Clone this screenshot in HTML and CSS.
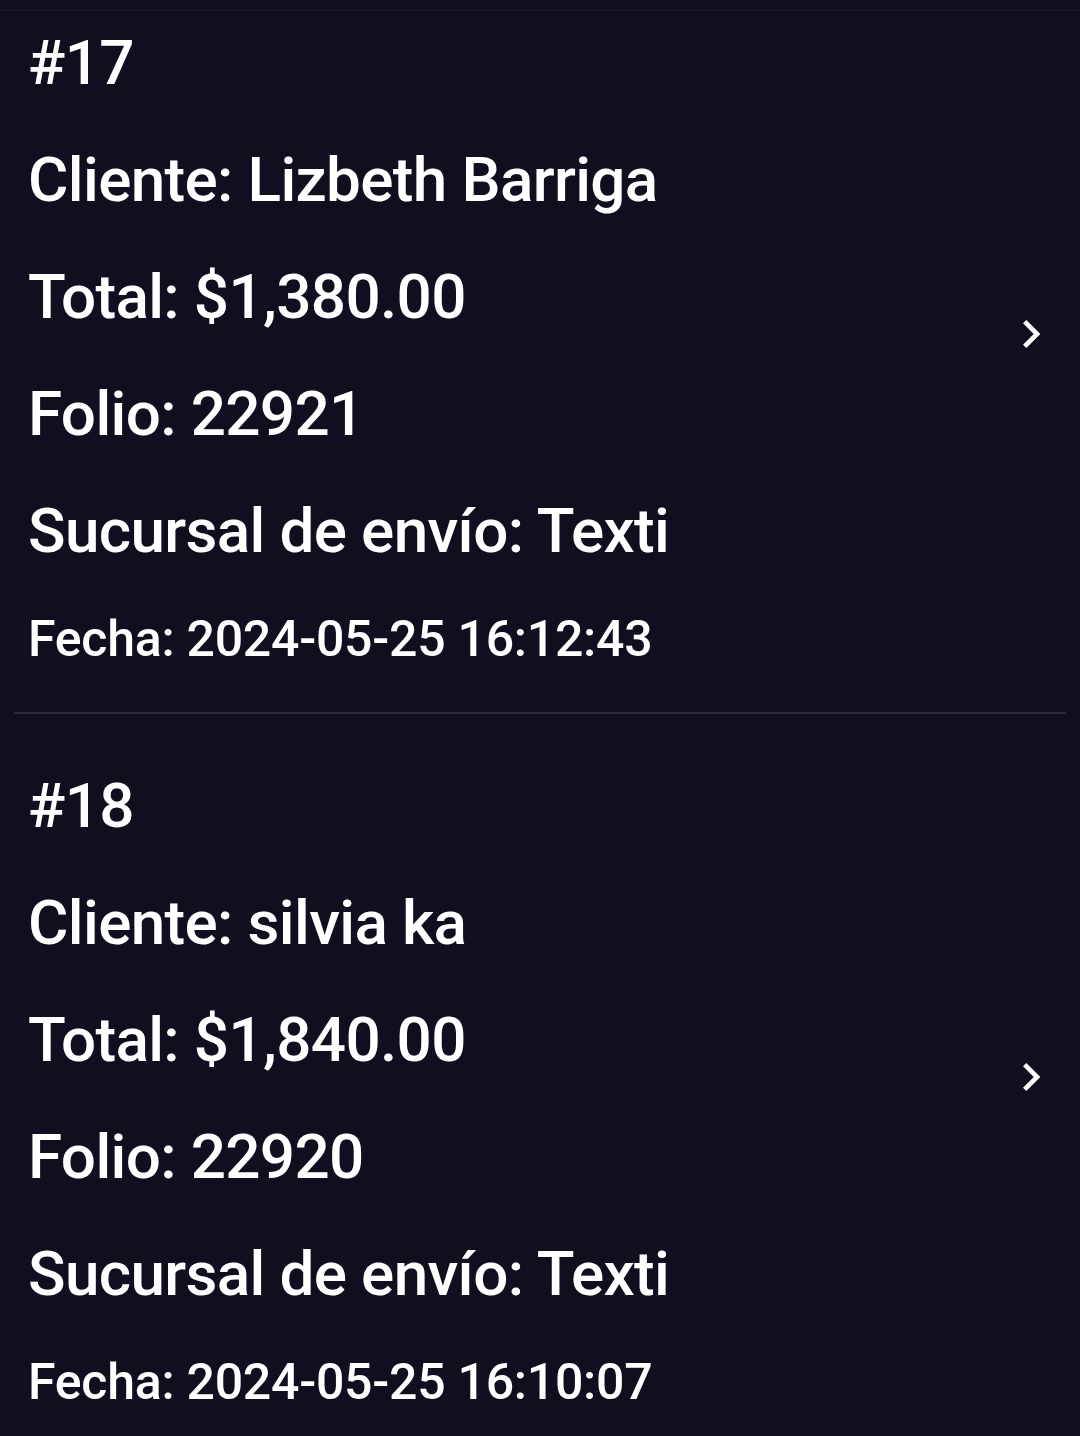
FILE: index.html
```html
<!DOCTYPE html>
<html lang="es">
<head>
    <meta charset="UTF-8">
    <meta name="viewport" content="width=device-width, initial-scale=1.0">
    <title>Pedidos</title>
    <link rel="stylesheet" href="styles.css">
</head>
<body>
<div class="top-edge"></div>
<div class="order-list">
    <div class="order">
        <div class="order-info">
            <div class="line">#17</div>
            <div class="line">Cliente: Lizbeth Barriga</div>
            <div class="line">Total: $1,380.00</div>
            <div class="line">Folio: 22921</div>
            <div class="line">Sucursal de envío: Texti</div>
            <div class="line date">Fecha: 2024-05-25 16:12:43</div>
        </div>
        <svg class="chevron" viewBox="0 0 24 24"><path d="M10 6L8.59 7.41 13.17 12l-4.58 4.59L10 18l6-6z"/></svg>
    </div>
    <div class="order">
        <div class="order-info">
            <div class="line">#18</div>
            <div class="line">Cliente: silvia ka</div>
            <div class="line">Total: $1,840.00</div>
            <div class="line">Folio: 22920</div>
            <div class="line">Sucursal de envío: Texti</div>
            <div class="line date">Fecha: 2024-05-25 16:10:07</div>
        </div>
        <svg class="chevron" viewBox="0 0 24 24"><path d="M10 6L8.59 7.41 13.17 12l-4.58 4.59L10 18l6-6z"/></svg>
    </div>
</div>
</body>
</html>
```

FILE: styles.css
```css
body {
    font-family: Roboto, 'Liberation Sans', sans-serif;
    background-color: #100f20;
    color: #fff;
    margin: 0;
    overflow: hidden;
}
.top-edge {
    height: 10px;
    border-bottom: 1px solid #1a1929;
}
.order-list {
    margin-top: -7px;
}
.order {
    display: flex;
    align-items: center;
    margin: 0 14px;
    padding: 33px 7px 22px 14px;
    border-bottom: 2px solid #2c2b3b;
}
.order:first-child {
    padding-top: 0;
}
.order-info {
    flex: 1;
}
.line {
    font-size: 62px;
    font-weight: 500;
    letter-spacing: -0.65px;
    line-height: 117px;
    white-space: nowrap;
}
.line.date {
    font-size: 50px;
    letter-spacing: -0.25px;
    line-height: 101px;
}
.chevron {
    width: 56px;
    height: 56px;
    fill: #fff;
    margin-bottom: 26px;
}
```
